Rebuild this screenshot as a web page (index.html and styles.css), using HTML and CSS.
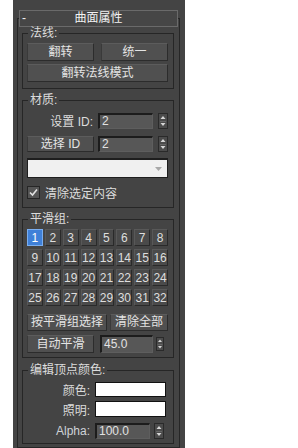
FILE: index.html
```html
<!DOCTYPE html>
<html lang="zh">
<head>
    <meta charset="UTF-8">
    <meta name="viewport" content="width=device-width, initial-scale=1.0">
    <title>曲面属性</title>
    <link rel="stylesheet" href="styles.css">
</head>
<body>
    <div class="panel">
        <div class="rollout">
            <div class="rollout-head">
                <span class="toggle">-</span>
                <span class="title">曲面属性</span>
            </div>

            <fieldset class="group normals">
                <legend>法线:</legend>
                <div class="pair">
                    <button class="btn">翻转</button>
                    <button class="btn">统一</button>
                    <button class="btn wide">翻转法线模式</button>
                </div>
            </fieldset>

            <fieldset class="group material">
                <legend>材质:</legend>
                <div class="id-row">
                    <span class="label">设置 ID:</span>
                    <div class="field">2</div>
                    <svg class="spin" width="10" height="16" viewBox="0 0 10 16"><rect x="0.5" y="0.5" width="9" height="15" fill="#4b4b4b" stroke="#2a2a2a"/><path d="M5 3 L7.5 6 H2.5Z M2.5 10 H7.5 L5 13Z" fill="#d6d6d6"/><path d="M2 8.5 H8" stroke="#666"/></svg>
                </div>
                <div class="id-row pick">
                    <button class="btn">选择 ID</button>
                    <div class="field">2</div>
                    <svg class="spin" width="10" height="16" viewBox="0 0 10 16"><rect x="0.5" y="0.5" width="9" height="15" fill="#4b4b4b" stroke="#2a2a2a"/><path d="M5 3 L7.5 6 H2.5Z M2.5 10 H7.5 L5 13Z" fill="#d6d6d6"/><path d="M2 8.5 H8" stroke="#666"/></svg>
                </div>
                <div class="dropdown">
                    <svg class="drop-arrow" width="7" height="4" viewBox="0 0 7 4"><path d="M0 0 H7 L3.5 4Z" fill="#a8a8a8"/></svg>
                </div>
                <label class="check">
                    <span class="box"><svg width="9" height="9" viewBox="0 0 9 9"><path d="M1 4.5 L3.5 7 L8 1.5" fill="none" stroke="#e2e2e2" stroke-width="1.6"/></svg></span>
                    清除选定内容
                </label>
            </fieldset>

            <fieldset class="group smoothing">
                <legend>平滑组:</legend>
                <div class="sg-grid">
                    <button class="sg on">1</button>
                    <button class="sg">2</button>
                    <button class="sg">3</button>
                    <button class="sg">4</button>
                    <button class="sg">5</button>
                    <button class="sg">6</button>
                    <button class="sg">7</button>
                    <button class="sg">8</button>
                    <button class="sg">9</button>
                    <button class="sg">10</button>
                    <button class="sg">11</button>
                    <button class="sg">12</button>
                    <button class="sg">13</button>
                    <button class="sg">14</button>
                    <button class="sg">15</button>
                    <button class="sg">16</button>
                    <button class="sg">17</button>
                    <button class="sg">18</button>
                    <button class="sg">19</button>
                    <button class="sg">20</button>
                    <button class="sg">21</button>
                    <button class="sg">22</button>
                    <button class="sg">23</button>
                    <button class="sg">24</button>
                    <button class="sg">25</button>
                    <button class="sg">26</button>
                    <button class="sg">27</button>
                    <button class="sg">28</button>
                    <button class="sg">29</button>
                    <button class="sg">30</button>
                    <button class="sg">31</button>
                    <button class="sg">32</button>
                </div>
                <div class="sg-actions">
                    <button class="btn">按平滑组选择</button>
                    <button class="btn">清除全部</button>
                </div>
                <div class="auto-row">
                    <button class="btn">自动平滑</button>
                    <div class="field">45.0</div>
                    <svg class="spin small" width="8" height="14" viewBox="0 0 8 14"><rect x="0.5" y="0.5" width="7" height="13" fill="#4b4b4b" stroke="#2a2a2a"/><path d="M4 2.5 L6 5 H2Z M2 9 H6 L4 11.5Z" fill="#d6d6d6"/><path d="M1.5 7.5 H6.5" stroke="#666"/></svg>
                </div>
            </fieldset>

            <fieldset class="group vcolor">
                <legend>编辑顶点颜色:</legend>
                <div class="vc-row">
                    <span class="label">颜色:</span>
                    <div class="swatch"></div>
                </div>
                <div class="vc-row light">
                    <span class="label">照明:</span>
                    <div class="swatch"></div>
                </div>
                <div class="vc-row alpha">
                    <span class="label">Alpha:</span>
                    <div class="field">100.0</div>
                    <svg class="spin" width="10" height="16" viewBox="0 0 10 16"><rect x="0.5" y="0.5" width="9" height="15" fill="#4b4b4b" stroke="#2a2a2a"/><path d="M5 3 L7.5 6 H2.5Z M2.5 10 H7.5 L5 13Z" fill="#d6d6d6"/><path d="M2 8.5 H8" stroke="#666"/></svg>
                </div>
            </fieldset>
        </div>
    </div>
</body>
</html>
```

FILE: styles.css
```css
body {
    margin: 0;
    background-color: #ffffff;
}
.panel {
    width: 172px;
    height: 448px;
    margin-left: 13px;
    padding-top: 10px;
    box-sizing: border-box;
    overflow: hidden;
    background-color: #444444;
    font-family: "Liberation Sans", "Noto Sans CJK SC", sans-serif;
    font-size: 12px;
    color: #dcdcdc;
}
.rollout {
    margin: 8px 5px 0 4px;
    border: 1px solid #262626;
    padding-bottom: 3px;
}
.rollout-head {
    display: grid;
    grid-template-columns: 1fr auto 1fr;
    align-items: center;
    height: 17px;
    margin: -9px 1px 0 1px;
    box-sizing: border-box;
    border: 1px solid #6a6a6a;
    background-color: #464646;
    color: #f2f2f2;
    line-height: 15px;
}
.toggle {
    padding-left: 2px;
}
.title {
    font-size: 12px;
}

.group {
    margin: 0 5px 0 4px;
    padding: 4px 5px 6px 4px;
    border: 1px solid #262626;
    min-width: 0;
}
.group legend {
    margin-left: 1px;
    padding: 0 2px;
    line-height: 12px;
    font-size: 12px;
}
.material {
    margin-top: 5px;
    padding-top: 6px;
    padding-bottom: 8px;
}
.smoothing {
    margin-top: 5px;
    padding-bottom: 4px;
}
.vcolor {
    margin-top: 6px;
    padding-top: 6px;
    padding-bottom: 4px;
}

.btn {
    display: block;
    height: 18px;
    padding: 0;
    box-sizing: border-box;
    border: 1px solid #2c2c2c;
    border-top-color: #5c5c5c;
    border-left-color: #3a3a3a;
    background-color: #505050;
    font-family: inherit;
    font-size: 12px;
    color: #e4e4e4;
    line-height: 16px;
}
.pair {
    display: grid;
    grid-template-columns: 1fr 1fr;
    column-gap: 7px;
    row-gap: 3px;
}
.pair .wide {
    grid-column: 1 / 3;
}

.field {
    height: 16px;
    box-sizing: border-box;
    padding-left: 2px;
    border-top: 2px solid #1c1c1c;
    border-left: 2px solid #1c1c1c;
    border-right: 1px solid #5e5e5e;
    border-bottom: 1px solid #5e5e5e;
    background-color: #575757;
    color: #e2e2e2;
    line-height: 13px;
}
.spin {
    display: block;
}

.id-row {
    display: grid;
    grid-template-columns: 67px 55px 10px;
    column-gap: 4px;
    align-items: center;
    height: 16px;
}
.id-row .spin {
    margin-left: 1px;
}
.id-row .btn {
    height: 16px;
    line-height: 14px;
}
.label {
    text-align: right;
    padding-right: 1px;
    white-space: nowrap;
}
.pick {
    margin-top: 8px;
}
.dropdown {
    position: relative;
    height: 20px;
    margin-top: 6px;
    box-sizing: border-box;
    border: 1px solid #1e1e1e;
    border-top-width: 2px;
    background-color: #f0f0f0;
}
.drop-arrow {
    position: absolute;
    right: 5px;
    top: 7px;
}
.check {
    display: flex;
    align-items: center;
    gap: 5px;
    height: 14px;
    margin-top: 7px;
}
.box {
    display: flex;
    align-items: center;
    justify-content: center;
    width: 11px;
    height: 11px;
    border: 1px solid #262626;
    background-color: #555555;
}

.sg-grid {
    display: grid;
    grid-template-columns: repeat(8, 1fr);
    grid-auto-rows: 17px;
    column-gap: 2px;
    row-gap: 3px;
}
.sg {
    padding: 0;
    box-sizing: border-box;
    border: 1px solid #2a2a2a;
    border-top-color: #585858;
    border-left-color: #585858;
    background-color: #4a4a4a;
    font-family: inherit;
    font-size: 12px;
    color: #dedede;
}
.sg.on {
    border-color: #7aaef0;
    background-color: #3f80d8;
    color: #ffffff;
}
.sg-actions {
    display: grid;
    grid-template-columns: 80px 58px;
    column-gap: 3px;
    margin-top: 8px;
}
.sg-actions .btn {
    height: 17px;
    line-height: 15px;
}
.auto-row {
    display: flex;
    align-items: center;
    margin-top: 4px;
}
.auto-row .btn {
    width: 67px;
}
.auto-row .field {
    width: 53px;
    height: 18px;
    margin-left: 6px;
    line-height: 15px;
}
.auto-row .spin {
    margin-left: 3px;
}

.vc-row {
    display: flex;
    align-items: center;
    height: 15px;
}
.vc-row .label {
    width: 64px;
    box-sizing: border-box;
}
.swatch {
    width: 71px;
    height: 15px;
    margin-left: 4px;
    box-sizing: border-box;
    border: 1px solid #111111;
    background-color: #ffffff;
}
.light {
    height: 16px;
    margin-top: 4px;
}
.light .swatch {
    height: 16px;
}
.alpha {
    height: 16px;
    margin-top: 6px;
}
.alpha .label {
    color: #cfd3d8;
}
.alpha .field {
    width: 55px;
    margin-left: 4px;
}
.alpha .spin {
    margin-left: 4px;
}
```
